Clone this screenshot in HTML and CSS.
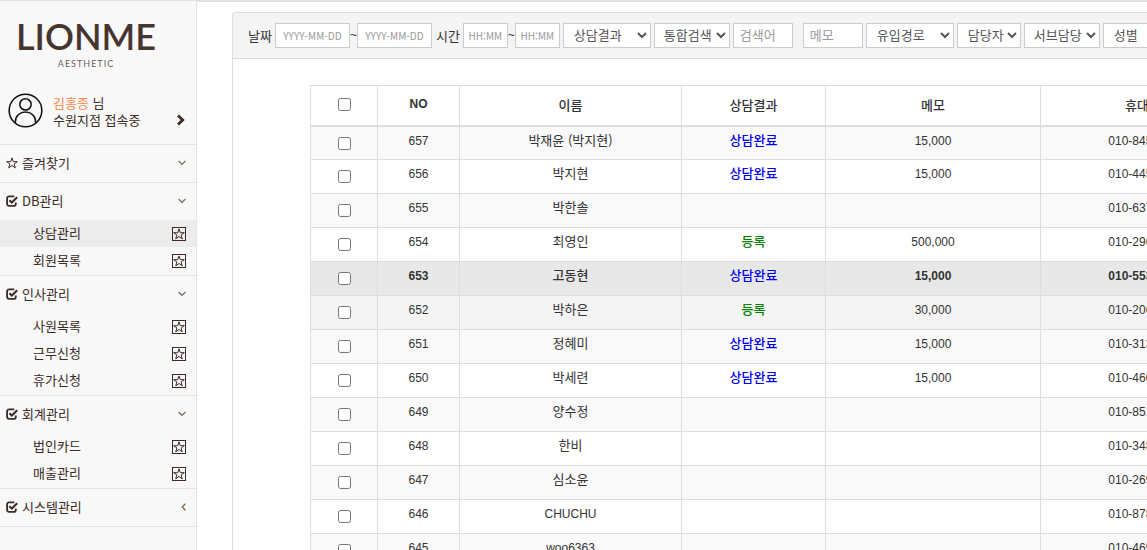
FILE: index.html
```html
<!DOCTYPE html>
<html lang="ko">
<head>
<meta charset="utf-8">
<title>LIONME 상담관리</title>
<link rel="stylesheet" href="styles.css">
</head>
<body>
<svg class="defs" aria-hidden="true">
  <symbol id="star" viewBox="0 0 12 12"><path d="M6 .9 7.3 4.7H11.3L8.1 7 9.3 10.9 6 8.5 2.7 10.9 3.9 7 .7 4.7H4.7Z" fill="none" stroke="currentColor"/></symbol>
  <symbol id="check" viewBox="0 0 12 12"><path d="M8.3 1.4H3A1.9 1.9 0 0 0 1.1 3.3V8.9A1.9 1.9 0 0 0 3 10.8H7.9A1.9 1.9 0 0 0 9.8 8.9V7.4" fill="none" stroke="currentColor" stroke-width="1.8"/><path d="M3.4 5.2 5.8 7.5 11.2 2.2" fill="none" stroke="currentColor" stroke-width="2"/></symbol>
  <symbol id="down" viewBox="0 0 8 8"><path d="M.6 2 4 5.4 7.4 2" fill="none" stroke="currentColor" stroke-width="1.3"/></symbol>
  <symbol id="left" viewBox="0 0 8 8"><path d="M7.4 .8 4.2 4 7.4 7.2" fill="none" stroke="currentColor" stroke-width="1.3"/></symbol>
</svg>
<div class="app">
  <aside class="sidebar">
    <div class="logo">
      <span class="logo-name">LIONME</span>
      <span class="logo-sub">AESTHETIC</span>
    </div>
    <div class="user">
      <svg class="avatar" viewBox="0 0 36 36" aria-hidden="true"><g fill="none" stroke="#111" stroke-width="1.6"><circle cx="18" cy="18" r="16.8"/><circle cx="18" cy="11.7" r="5.8"/><path d="M7.6 31V29.5C7.6 23.6 12.2 19.6 18 19.6S28.4 23.6 28.4 29.5V31"/></g></svg>
      <div class="user-text"><div><span class="user-name">김홍종</span> 님</div><div>수원지점 접속중</div></div>
      <button class="user-more" aria-label="더보기"><svg viewBox="0 0 10 12" aria-hidden="true"><path d="M2 1.5 6.7 6 2 10.5" fill="none" stroke="currentColor" stroke-width="2.8"/></svg></button>
    </div>
    <nav>
      <section class="group">
        <button class="group-head"><svg class="ico"><use href="#star"/></svg>즐겨찾기<svg class="arrow"><use href="#down"/></svg></button>
      </section>
      <section class="group">
        <button class="group-head"><svg class="ico"><use href="#check"/></svg>DB관리<svg class="arrow"><use href="#down"/></svg></button>
        <ul class="sub">
          <li class="active"><a href="#">상담관리</a><button class="fav" aria-label="즐겨찾기"><svg><use href="#star"/></svg></button></li>
          <li><a href="#">회원목록</a><button class="fav" aria-label="즐겨찾기"><svg><use href="#star"/></svg></button></li>
        </ul>
      </section>
      <section class="group">
        <button class="group-head"><svg class="ico"><use href="#check"/></svg>인사관리<svg class="arrow"><use href="#down"/></svg></button>
        <ul class="sub">
          <li><a href="#">사원목록</a><button class="fav" aria-label="즐겨찾기"><svg><use href="#star"/></svg></button></li>
          <li><a href="#">근무신청</a><button class="fav" aria-label="즐겨찾기"><svg><use href="#star"/></svg></button></li>
          <li><a href="#">휴가신청</a><button class="fav" aria-label="즐겨찾기"><svg><use href="#star"/></svg></button></li>
        </ul>
      </section>
      <section class="group">
        <button class="group-head"><svg class="ico"><use href="#check"/></svg>회계관리<svg class="arrow"><use href="#down"/></svg></button>
        <ul class="sub">
          <li><a href="#">법인카드</a><button class="fav" aria-label="즐겨찾기"><svg><use href="#star"/></svg></button></li>
          <li><a href="#">매출관리</a><button class="fav" aria-label="즐겨찾기"><svg><use href="#star"/></svg></button></li>
        </ul>
      </section>
      <section class="group last">
        <button class="group-head"><svg class="ico"><use href="#check"/></svg>시스템관리<svg class="arrow"><use href="#left"/></svg></button>
      </section>
    </nav>
  </aside>
  <main class="main">
    <div class="panel">
      <form class="filters">
        <div class="field"><label for="d1">날짜</label><span class="range"><input id="d1" class="date" placeholder="YYYY-MM-DD"><span class="tilde">~</span><input class="date" placeholder="YYYY-MM-DD" aria-label="종료 날짜"></span></div>
        <div class="field"><label for="t1">시간</label><span class="range"><input id="t1" class="time" placeholder="HH:MM"><span class="tilde">~</span><input class="time" placeholder="HH:MM" aria-label="종료 시간"></span></div>
        <select class="w-lg" aria-label="상담결과"><option>상담결과</option></select>
        <select class="w-md" aria-label="통합검색"><option>통합검색</option></select>
        <input class="word" placeholder="검색어" aria-label="검색어">
        <input class="word memo" placeholder="메모" aria-label="메모">
        <select class="w-lg" aria-label="유입경로"><option>유입경로</option></select>
        <select class="w-sm" aria-label="담당자"><option>담당자</option></select>
        <select class="w-md" aria-label="서브담당"><option>서브담당</option></select>
        <select class="w-sm" aria-label="성별"><option>성별</option></select>
      </form>
      <div class="table-wrap">
        <table>
          <colgroup><col class="c-check"><col class="c-no"><col class="c-name"><col class="c-result"><col class="c-memo"><col class="c-phone"></colgroup>
          <thead><tr><th><input type="checkbox" aria-label="전체 선택"></th><th class="num">NO</th><th>이름</th><th>상담결과</th><th>메모</th><th>휴대전화</th></tr></thead>
          <tbody>
            <tr><td><input type="checkbox" aria-label="657"></td><td class="num">657</td><td>박재윤 (박지현)</td><td class="done">상담완료</td><td class="num">15,000</td><td class="num">010-8450-0000</td></tr>
            <tr><td><input type="checkbox" aria-label="656"></td><td class="num">656</td><td>박지현</td><td class="done">상담완료</td><td class="num">15,000</td><td class="num">010-4450-0000</td></tr>
            <tr><td><input type="checkbox" aria-label="655"></td><td class="num">655</td><td>박한솔</td><td></td><td></td><td class="num">010-6370-0000</td></tr>
            <tr><td><input type="checkbox" aria-label="654"></td><td class="num">654</td><td>최영인</td><td class="joined">등록</td><td class="num">500,000</td><td class="num">010-2960-0000</td></tr>
            <tr class="current"><td><input type="checkbox" aria-label="653"></td><td class="num">653</td><td>고동현</td><td class="done">상담완료</td><td class="num">15,000</td><td class="num">010-5530-0000</td></tr>
            <tr class="hover"><td><input type="checkbox" aria-label="652"></td><td class="num">652</td><td>박하은</td><td class="joined">등록</td><td class="num">30,000</td><td class="num">010-2060-0000</td></tr>
            <tr><td><input type="checkbox" aria-label="651"></td><td class="num">651</td><td>정혜미</td><td class="done">상담완료</td><td class="num">15,000</td><td class="num">010-3130-0000</td></tr>
            <tr><td><input type="checkbox" aria-label="650"></td><td class="num">650</td><td>박세련</td><td class="done">상담완료</td><td class="num">15,000</td><td class="num">010-4600-0000</td></tr>
            <tr><td><input type="checkbox" aria-label="649"></td><td class="num">649</td><td>양수정</td><td></td><td></td><td class="num">010-8510-0000</td></tr>
            <tr><td><input type="checkbox" aria-label="648"></td><td class="num">648</td><td>한비</td><td></td><td></td><td class="num">010-3480-0000</td></tr>
            <tr><td><input type="checkbox" aria-label="647"></td><td class="num">647</td><td>심소윤</td><td></td><td></td><td class="num">010-2690-0000</td></tr>
            <tr><td><input type="checkbox" aria-label="646"></td><td class="num">646</td><td class="num">CHUCHU</td><td></td><td></td><td class="num">010-8780-0000</td></tr>
            <tr><td><input type="checkbox" aria-label="645"></td><td class="num">645</td><td class="num">woo6363</td><td></td><td></td><td class="num">010-4690-0000</td></tr>
          </tbody>
        </table>
      </div>
    </div>
  </main>
</div>
</body>
</html>
```
FILE: styles.css
```css
* { box-sizing: border-box; }
body {
  margin: 0;
  background: #fff;
  color: #333;
  font: 13px/17px "Noto Sans CJK KR", sans-serif;
}
button { padding: 0; border: 0; background: none; color: inherit; font: inherit; cursor: pointer; }
.defs { display: none; }
.app { display: flex; height: 100vh; overflow: hidden; border-top: 1px solid #dee2e6; }

.sidebar { flex: none; width: 197px; background: #f8f8f8; border-right: 1px solid #e4e4e4; color: #3a2b26; }
.logo { display: flex; flex-direction: column; align-items: center; padding: 14px 24px 0 0; font-family: Lato, sans-serif; color: #46352e; }
.logo-name { font-size: 36px; line-height: 42px; font-weight: 600; }
.logo-sub { margin-top: 2px; font-size: 9px; line-height: 10px; letter-spacing: 1px; color: #6b5f5a; }
.user { display: flex; align-items: center; gap: 10px; padding: 24px 10px 16px 8px; }
.avatar { width: 35px; height: 35px; flex: none; }
.user-text { flex: 1; }
.user-name { color: #ff8a4c; }
.user-more { align-self: flex-end; height: 16px; }
.user-more svg { display: block; width: 10px; height: 12px; }

.group { border-top: 1px solid #e4e4e4; }
.group.last { border-bottom: 1px solid #e4e4e4; }
.group-head { display: flex; align-items: center; gap: 4px; width: 100%; height: 37px; padding: 0 10px 2px 6px; text-align: left; }
.ico { width: 12px; height: 12px; flex: none; }
.arrow { width: 8px; height: 8px; margin-left: auto; color: #7b6a50; }
.sub { list-style: none; margin: 0; padding: 0 0 1px; }
.sub li { display: flex; align-items: center; justify-content: space-between; height: 27px; padding: 0 10px 0 33px; }
.sub li.active { background: #ececec; }
.sub a { color: inherit; text-decoration: none; padding-bottom: 2px; }
.fav { display: flex; align-items: center; justify-content: center; width: 14px; height: 14px; border: 1px solid #3a2b26; }
.fav svg { width: 12px; height: 12px; flex: none; }

.main { flex: 1; min-width: 0; border-top: 1px solid #dee2e6; padding: 10px 0 0 35px; }
.panel { border: 1px solid #ddd; border-right: 0; border-radius: 4px 0 0 0; min-height: 100%; overflow: hidden; }
.filters { display: flex; align-items: center; gap: 3px; padding: 10px 0 10px 15px; background: #f4f4f4; border-bottom: 1px solid #ddd; }
.filters > * { flex: none; }
.field { display: flex; align-items: center; gap: 3px; }
.field + .field { margin-left: 1px; }
.range { display: flex; align-items: center; }
.tilde { width: 7px; text-align: center; font: 12px/17px "Liberation Sans", sans-serif; }
.filters input, .filters select { height: 25px; margin: 0; border: 1px solid #ccc; border-radius: 0; background: #fff; color: #555; font: 13px/17px "Noto Sans CJK KR", sans-serif; }
.filters input { padding: 0 6px 2px; }
.filters input::placeholder { color: #999; }
.filters select { padding: 0 0 2px 6px; }
.filters .date, .filters .time { padding: 0 4px; font-size: 10px; text-align: center; }
.filters .date { width: 75px; }
.filters .time { width: 45px; }
.filters .word { width: 60px; }
.filters .memo { margin-left: 7px; }
.filters .w-lg { width: 88px; }
.filters .w-md { width: 76px; padding-left: 5px; }
.filters .w-sm { width: 64px; }

.table-wrap { padding: 26px 0 0 77px; }
table { width: 947px; table-layout: fixed; border-collapse: collapse; }
.c-check { width: 67px; }
.c-no { width: 82px; }
.c-name { width: 222px; }
.c-result { width: 144px; }
.c-memo { width: 215px; }
.c-phone { width: 217px; }
th, td { border: 1px solid #ddd; text-align: center; padding: 0; }
th { height: 40px; padding-bottom: 2px; border-bottom-width: 2px; font-weight: 500; }
td { height: 34px; padding: 4px 0 8px; vertical-align: top; }
.num { font-family: "Liberation Sans", sans-serif; font-size: 12px; }
th.num { font-weight: 700; }
td.num { padding-top: 6px; }
table input { display: block; width: 13px; height: 13px; margin: 0 auto; }
td input { margin-top: 6px; }
tbody tr:nth-child(odd) { background: #f9f9f9; }
tbody tr.hover { background: #f4f4f4; }
tbody tr.current { background: #e8e8e8; font-weight: 500; }
tbody tr.current .num { font-weight: 700; }
tbody td.done, tbody td.joined { font-weight: 500; }
.done { color: #00e; }
.joined { color: #008000; }
```
